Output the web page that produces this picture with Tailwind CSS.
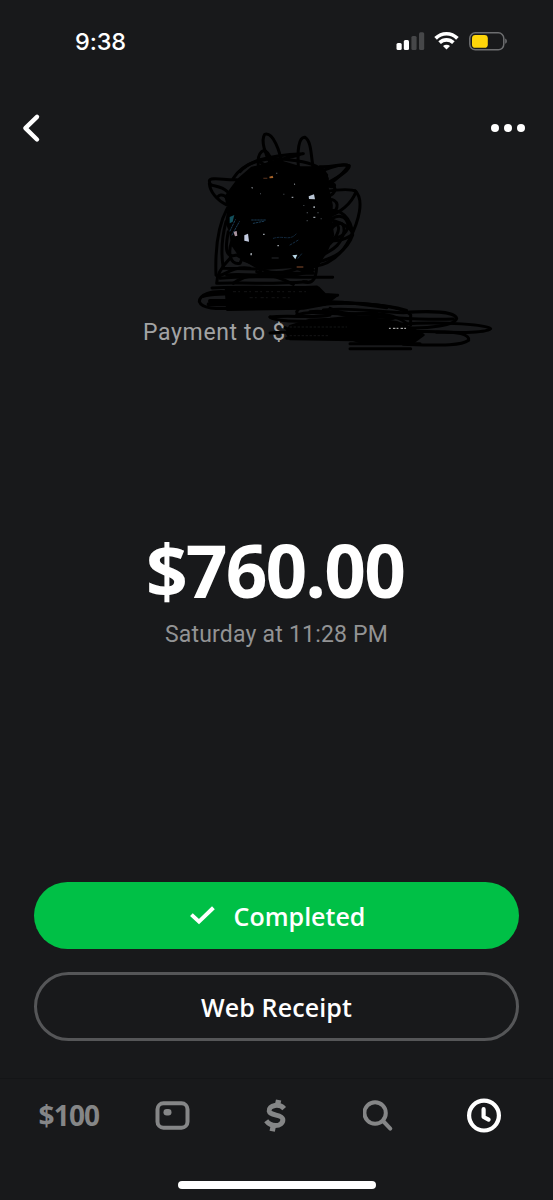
<!DOCTYPE html>
<html lang="en">
<head>
  <meta charset="UTF-8" />
  <meta name="viewport" content="width=device-width, initial-scale=1.0" />
  <title>Payment</title>
  <script src="https://cdn.jsdelivr.net/npm/@tailwindcss/browser@4"></script>
</head>
<body class="bg-[#18191b] font-['Roboto',sans-serif] text-white overflow-hidden">
  <div class="relative w-[553px] h-[1200px] flex flex-col">

    <!-- Status bar -->
    <div class="h-[82px] shrink-0 flex items-center justify-between pl-[75px] pr-[45px]">
      <span class="font-['Inter',sans-serif] font-medium text-[23.5px] leading-none tracking-[-0.1px] pt-px">9:38</span>
      <div class="flex items-center gap-[9px]">
        <svg width="29" height="20" viewBox="0 0 29 20">
          <rect x="0.5" y="12" width="5.2" height="7" rx="1.5" fill="#fff" />
          <rect x="7.8" y="9" width="5.2" height="10" rx="1.5" fill="#fff" />
          <rect x="15.4" y="5" width="5.2" height="14" rx="1.5" fill="#464749" />
          <rect x="23" y="1.2" width="5.2" height="17.8" rx="1.5" fill="#464749" />
        </svg>
        <svg width="26" height="20" viewBox="0 0 26 20">
          <g fill="none" stroke="#fff" stroke-width="3.7">
            <path d="M1.6 7.4C7.8 1.2 17.2 1.2 23.4 7.4" />
            <path d="M5.6 11.7C9.5 7.9 15.5 7.9 19.4 11.7" />
          </g>
          <path d="M12.5 18.6L9 15C11 13.2 14 13.2 16 15Z" fill="#fff" />
        </svg>
        <svg width="39" height="20" viewBox="0 0 39 20">
          <rect x="0.8" y="1.8" width="34" height="17" rx="5.5" fill="none" stroke="#6d6e70" stroke-width="1.5" />
          <rect x="3" y="4" width="15.8" height="12.8" rx="3.4" fill="#ffd60a" />
          <path d="M36.2 7.6C38.4 8.4 38.4 12 36.2 12.8Z" fill="#6d6e70" />
        </svg>
      </div>
    </div>

    <!-- Nav bar -->
    <div class="h-[92px] shrink-0 flex items-center justify-between pl-[21px] pr-[28px]">
      <svg width="20" height="30" viewBox="0 0 20 30">
        <path d="M16 3.9L4.4 15.2L16 26.5" fill="none" stroke="#fff" stroke-width="4.4" stroke-linecap="round" stroke-linejoin="round" />
      </svg>
      <div class="flex gap-[5px]">
        <span class="size-2 rounded-full bg-white"></span>
        <span class="size-2 rounded-full bg-white"></span>
        <span class="size-2 rounded-full bg-white"></span>
      </div>
    </div>

    <!-- Recipient -->
    <div class="h-[351px] shrink-0 pt-[142px] pl-[143px]">
      <p class="text-[23px] leading-[34px] tracking-[0.65px] text-[#a2a3a4]">Payment to $</p>
    </div>

    <!-- Amount -->
    <div class="shrink-0 h-[357px] flex flex-col items-center">
      <h1 class="font-['Open_Sans',sans-serif] text-[73px] leading-[90px] font-bold tracking-[-1.9px] pr-[3px]">$760.00</h1>
      <p class="mt-[3px] text-[23px] leading-[34px] tracking-[0.2px] text-[#929394]">Saturday at 11:28 PM</p>
    </div>

    <!-- Actions -->
    <div class="px-[34px] flex flex-col gap-[23px] font-['Open_Sans',sans-serif] font-semibold text-[25px]">
      <button class="h-[67px] rounded-full bg-[#00c046] flex items-center justify-center gap-[19px] pl-[2px]">
        <svg width="25" height="20" viewBox="0 0 25 20">
          <path d="M1.4 8.6L9 15.6L23.4 1.8" fill="none" stroke="#fff" stroke-width="4" />
        </svg>
        <span class="pt-[2px]">Completed</span>
      </button>
      <button class="h-[69px] rounded-full border-[3px] border-[#555658] tracking-[0.1px] pt-[2px]">Web Receipt</button>
    </div>

    <!-- Tab bar -->
    <div class="mt-auto h-[122px] border-t border-[#141517] pt-[17px] px-[17px] grid grid-cols-5 items-start justify-items-center content-start text-[#858687]">
      <span class="font-['Open_Sans',sans-serif] text-[28px] leading-[39px] font-bold tracking-[-0.8px]">$100</span>
      <svg width="36" height="40" viewBox="0.5 0 36 40">
        <rect x="3" y="7.3" width="30" height="24.4" rx="6" fill="none" stroke="currentColor" stroke-width="4" />
        <rect x="9" y="13" width="8" height="6.4" rx="3.2" fill="currentColor" />
      </svg>
      <svg width="24" height="40" viewBox="0 0 24 40">
        <g fill="none" stroke="currentColor">
          <path d="M20.2 12.6C17.4 9.6 14 9 11 9.5C7 10.2 4.8 12.4 5.2 15C6.2 20.4 18 17.8 18.8 23.2C19.2 27 15.8 29.6 11.4 29.6C7.6 29.6 4.6 28 2.2 24.8" stroke-width="5" />
          <path d="M14.6 4L13.4 9.5M9.4 29.5L8.2 35.2" stroke-width="5.4" />
        </g>
      </svg>
      <svg width="34" height="40" viewBox="1.5 0 34 40" fill="none" stroke="currentColor" stroke-width="4">
        <circle cx="13.6" cy="17" r="10.7" />
        <path d="M21.6 25L28.8 32.6" stroke-linecap="round" />
      </svg>
      <svg class="text-white" width="36" height="40" viewBox="0 0 36 40" fill="none" stroke="currentColor" stroke-width="4.2">
        <circle cx="18" cy="19.6" r="14.9" />
        <path d="M17.6 13.2V21L22.6 23.6" stroke-linecap="round" stroke-linejoin="round" />
      </svg>
    </div>

    <!-- Home indicator -->
    <div class="absolute left-[178px] top-[1181px] w-[198px] h-[8px] rounded-full bg-white"></div>

    <!-- Marker scribble over avatar, name and cashtag -->
    <svg class="absolute left-[190px] top-[125px]" width="310" height="235" viewBox="0 0 930 705" fill="none" stroke="#000" stroke-linecap="round" stroke-linejoin="round">
      <!-- solid middle -->
      <path d="M145 165L185 130L240 118L270 110L330 128L395 128L412 160L412 190L424 240L422 290L428 330L410 375L385 415L350 440L300 425L230 430L160 405L128 360L122 320L110 290L118 250L108 215Z" fill="#000" stroke-width="9" />
      <!-- loops around the avatar -->
      <g stroke-width="9">
        <path d="M245 120C225 90 212 45 224 28C250 20 270 80 276 118" />
        <path d="M325 125C322 80 325 35 345 37C365 50 362 90 370 130" />
        <path d="M205 125C200 80 225 60 240 95C255 120 230 130 210 110" />
        <path d="M130 160C160 110 230 90 340 86C300 100 200 110 140 175" />
        <path d="M150 140C180 105 240 95 300 105C350 110 390 120 410 150" />
        <path d="M112 200C85 175 58 190 58 168C60 155 100 165 140 164M58 175C60 200 80 225 110 240C120 210 90 205 85 214" />
        <path d="M370 150C400 135 450 115 478 122C480 135 440 160 400 180" />
        <path d="M390 125C430 128 460 112 476 122C455 155 430 165 415 182C430 190 440 180 430 178" />
        <path d="M400 200C440 194 485 190 498 200C485 235 450 265 410 275" />
        <path d="M495 197C525 225 505 290 480 340C450 400 410 420 370 425" />
        <path d="M410 260C450 245 485 280 488 330C470 380 430 400 380 412" />
        <path d="M405 300C440 260 472 270 475 305C460 345 420 345 410 330" />
        <path d="M410 225C450 215 450 260 420 265M400 180C450 175 440 210 410 215" />
        <path d="M395 350C435 285 465 280 462 320C450 370 420 375 400 390" />
        <path d="M405 280C450 290 490 310 487 328C460 350 420 350 400 345" />
        <path d="M415 310C435 280 455 300 440 330C430 350 415 360 405 370" />
        <path d="M112 250C85 300 75 370 78 450C90 465 120 420 180 430" />
        <path d="M108 290C92 350 95 400 100 430L200 432" />
        <path d="M125 350C114 380 118 420 150 415L165 380M115 320C105 370 105 400 140 390L200 425" />
        <path d="M120 400C100 420 80 450 80 475C120 470 220 480 350 470" />
        <path d="M90 460C180 450 300 458 428 457" />
        <path d="M200 440C260 470 370 450 380 405C382 460 370 480 340 470" />
        <path d="M110 450C170 440 280 470 370 435M130 475C180 440 240 440 310 478" />
        <path d="M205 425C240 455 300 440 340 425M200 420L215 445H370" />
      </g>
      <!-- name -->
      <path d="M108 488H385L405 508L440 511L405 538L340 550L112 554Z" fill="#000" stroke-width="8" />
      <g stroke-width="9">
        <path d="M110 500C60 496 28 510 28 530C35 552 80 552 130 550" />
        <path d="M66 489C150 482 290 492 380 486M40 514C80 500 150 512 443 511" />
        <path d="M60 528H120M56 538H120" stroke-width="12" />
        <path d="M390 530C450 528 520 538 590 548" />
      </g>
      <!-- cashtag -->
      <path d="M300 604L360 585L420 582L500 575L620 592L660 608L700 630L665 655H530L490 645L300 642L290 622Z" fill="#000" stroke-width="8" />
      <g stroke-width="9">
        <path d="M240 576C290 570 380 580 420 570C360 580 320 575 320 560C330 540 370 532 430 534C520 530 640 545 662 570V600" />
        <path d="M240 576C260 592 330 588 480 590M320 570C380 550 440 580 560 562" />
        <path d="M400 555C480 545 560 562 640 563C720 557 795 560 800 580C795 600 720 612 640 608" />
        <path d="M490 580C560 565 640 588 790 582M380 540C460 530 580 535 650 556" />
        <path d="M630 598C760 588 900 600 902 611C880 630 740 620 650 618" />
        <path d="M740 622C800 618 840 628 836 646C810 665 740 660 640 658" />
        <path d="M240 624C270 620 320 622 420 616M285 608L310 622M290 640H420" />
        <path d="M480 656H690M480 671H662" />
        <path d="M420 550C500 590 580 540 650 595M360 560C440 550 520 600 610 580" />
      </g>
      <!-- bits of the avatar that still show -->
      <g stroke="none">
        <path d="M356 214L372 208L375 223L357 222Z" fill="#b9c5d4" />
        <path d="M163 331L174 326L177 350L163 347Z" fill="#c3cbe0" />
        <path d="M130 320L140 318L142 332L135 334Z" fill="#a9939f" />
        <path d="M307 391L322 389L316 403Z" fill="#b8d8e8" />
        <path d="M119 276L133 270L128 290L119 295Z" fill="#13505c" />
        <path d="M238 155L248 152L250 159L239 160Z" fill="#a86428" />
        <path d="M183 188L188 186V191ZM181 385L186 384V391L181 391ZM305 215H310V219H305ZM262 360H267V364H262ZM370 244H375V249H370ZM370 275H376V279H370ZM219 326H224V330H219ZM312 175L316 178L312 180Z" fill="#93999f" />
        <path d="M220 158H232V161H220ZM320 424H340V428H320Z" fill="#59331e" />
        <path d="M340 240H343V243H340ZM350 262H354V265H350ZM382 262H386V265H382ZM350 285H353V289H350ZM392 280H395V283H392ZM280 206H283V209H280ZM245 398H266V400H245ZM258 143H262V146H258ZM210 205H213V208H210Z" fill="#4c5258" />
      </g>
      <g stroke-width="3">
        <path d="M120 318L136 284M126 330L148 290M185 285H230M190 295L225 288" stroke="#1a3a52" stroke-dasharray="5 4" />
        <path d="M250 340C280 330 300 350 320 325M300 360L325 345M324 400L336 385" stroke="#142b40" stroke-dasharray="6 5" />
        <path d="M130 500H360M180 518H300" stroke="#1d1e1f" stroke-width="2" stroke-dasharray="7 9 3 14" />
        <path d="M300 632H420M300 606H470" stroke="#1d1e1f" stroke-width="2" stroke-dasharray="5 7" />
        <path d="M598 610H655" stroke="#c8c8c8" stroke-dasharray="3 9 5 6" />
      </g>
    </svg>
  </div>
</body>
</html>
